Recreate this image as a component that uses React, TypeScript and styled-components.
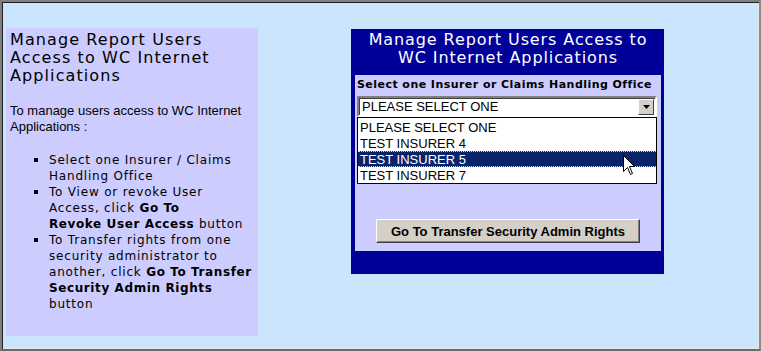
import React from "react";
import styled, { createGlobalStyle } from "styled-components";

const GlobalStyle = createGlobalStyle`
    html, body {
        margin: 0;
        padding: 0;
        background: #ffffff;
    }
    body {
        font-family: "DejaVu Sans", Verdana, sans-serif;
    }
`;

const Frame = styled.div`
    width: 761px;
    height: 351px;
    box-sizing: border-box;
    border: 2px solid #7f7f7f;
    border-right-color: #8a8a8a;
    border-bottom-color: #6a6a6a;
    box-shadow: inset 1px 1px 0 #202020, inset -1px -1px 0 #e8e8e8;
    background: #cce5ff;
    display: flex;
    align-items: flex-start;
    padding: 26px 0 0 4px;
`;

const HelpPanel = styled.div`
    width: 252px;
    height: 308px;
    box-sizing: border-box;
    background: #ccccff;
    padding: 3px 4px 0 4px;
    color: #000000;
`;

const HelpTitle = styled.h1`
    margin: 0;
    font-family: "DejaVu Sans", Verdana, sans-serif;
    font-size: 16px;
    font-weight: normal;
    line-height: 18px;
    letter-spacing: 1.1px;
`;

const Intro = styled.p`
    margin: 18px 0 0 0;
    font-family: "Liberation Sans", Arial, sans-serif;
    font-size: 13px;
    line-height: 16px;
`;

const Steps = styled.ul`
    margin: 17px 0 0 0;
    padding: 0 0 0 39px;
    list-style: square;
    font-family: "DejaVu Sans", Verdana, sans-serif;
    font-size: 12px;
    line-height: 16px;
    letter-spacing: 0.8px;
    white-space: nowrap;
    li::marker {
        font-size: 13px;
    }
    b {
        font-weight: bold;
        letter-spacing: 0.6px;
    }
`;

const AccessBox = styled.div`
    margin: 1px 0 0 93px;
    width: 313px;
    box-sizing: border-box;
    background: #000099;
    padding: 2px 3px 23px 4px;
`;

const AccessTitle = styled.h2`
    margin: 0;
    color: #ffffff;
    text-align: center;
    font-family: "DejaVu Sans", Verdana, sans-serif;
    font-size: 16px;
    font-weight: normal;
    line-height: 18px;
    letter-spacing: 0.9px;
`;

const AccessForm = styled.div`
    margin-top: 8px;
    background: #ccccff;
    padding: 2px 2px 8px 2px;
    display: flex;
    flex-direction: column;
`;

const FieldLabel = styled.label`
    font-family: "DejaVu Sans", Verdana, sans-serif;
    font-size: 11px;
    font-weight: bold;
    line-height: 16px;
    letter-spacing: 0.45px;
    color: #000000;
    margin-bottom: 3px;
    white-space: nowrap;
`;

const SelectWrap = styled.div`
    position: relative;
    width: 300px;
`;

const SelectBox = styled.div`
    height: 21px;
    box-sizing: border-box;
    background: #ffffff;
    border: 2px solid;
    border-color: #808080 #ffffff #ffffff #808080;
    box-shadow: inset 1px 1px 0 #404040;
    display: flex;
    align-items: center;
    justify-content: space-between;
    padding: 0 1px 0 3px;
    font-family: "Liberation Sans", Arial, sans-serif;
    font-size: 13px;
    color: #000000;
`;

const DropButton = styled.div`
    width: 16px;
    height: 16px;
    box-sizing: border-box;
    background: #d4d0c8;
    border: 1px solid;
    border-color: #ffffff #404040 #404040 #ffffff;
    display: flex;
    align-items: center;
    justify-content: center;
    margin-top: 1px;
`;

const ListBox = styled.div`
    position: absolute;
    top: 100%;
    left: 0;
    right: 0;
    background: #ffffff;
    border: 1px solid #000000;
    padding: 1px 0 0 0;
    z-index: 2;
`;

const Option = styled.div<{ $active?: boolean }>`
    height: 16px;
    line-height: 15px;
    box-sizing: border-box;
    padding-left: 2px;
    font-family: "Liberation Sans", Arial, sans-serif;
    font-size: 13px;
    color: ${p => (p.$active ? "#ffffff" : "#000000")};
    background: ${p => (p.$active ? "#0a246a" : "transparent")};
    border: 1px dotted ${p => (p.$active ? "#e8e070" : "transparent")};
    border-left: 0;
    border-right: 0;
    white-space: nowrap;
`;

const Pointer = styled.svg`
    position: absolute;
    left: 265px;
    top: 37px;
`;

const ActionButton = styled.button`
    align-self: center;
    margin-top: 102px;
    width: 264px;
    height: 24px;
    box-sizing: border-box;
    background: #d4d0c8;
    border: 1px solid;
    border-color: #ffffff #404040 #404040 #ffffff;
    box-shadow: inset -1px -1px 0 #808080;
    font-family: "Liberation Sans", Arial, sans-serif;
    font-size: 13px;
    font-weight: bold;
    color: #000000;
    padding: 0;
`;

const options = ["PLEASE SELECT ONE", "TEST INSURER 4", "TEST INSURER 5", "TEST INSURER 7"];

export default function App() {
    return (
        <>
            <GlobalStyle />
            <Frame>
                <HelpPanel>
                    <HelpTitle>
                        Manage Report Users
                        <br />
                        Access to WC Internet
                        <br />
                        Applications
                    </HelpTitle>
                    <Intro>To manage users access to WC Internet Applications :</Intro>
                    <Steps>
                        <li>
                            Select one Insurer / Claims
                            <br />
                            Handling Office
                        </li>
                        <li>
                            To View or revoke User
                            <br />
                            Access, click <b>Go To</b>
                            <br />
                            <b>Revoke User Access</b> button
                        </li>
                        <li>
                            To Transfer rights from one
                            <br />
                            security administrator to
                            <br />
                            another, click <b>Go To Transfer</b>
                            <br />
                            <b>Security Admin Rights</b>
                            <br />
                            button
                        </li>
                    </Steps>
                </HelpPanel>
                <AccessBox>
                    <AccessTitle>
                        Manage Report Users Access to
                        <br />
                        WC Internet Applications
                    </AccessTitle>
                    <AccessForm>
                        <FieldLabel>Select one Insurer or Claims Handling Office</FieldLabel>
                        <SelectWrap>
                            <SelectBox>
                                <span>PLEASE SELECT ONE</span>
                                <DropButton>
                                    <svg width="7" height="4" viewBox="0 0 7 4">
                                        <path d="M0 0 H7 L3.5 4 Z" fill="#000000" />
                                    </svg>
                                </DropButton>
                            </SelectBox>
                            <ListBox>
                                {options.map((o, i) => (
                                    <Option key={o} $active={i === 2}>
                                        {o}
                                    </Option>
                                ))}
                                <Pointer width="13" height="21" viewBox="0 0 13 21">
                                    <path
                                        d="M0.5 0.5 L0.5 16.5 L4.5 12.5 L7.5 19.5 L9.5 18.5 L6.5 11.5 L11.5 11.5 Z"
                                        fill="#ffffff"
                                        stroke="#000000"
                                        strokeWidth="1"
                                    />
                                </Pointer>
                            </ListBox>
                        </SelectWrap>
                        <ActionButton>Go To Transfer Security Admin Rights</ActionButton>
                    </AccessForm>
                </AccessBox>
            </Frame>
        </>
    );
}
